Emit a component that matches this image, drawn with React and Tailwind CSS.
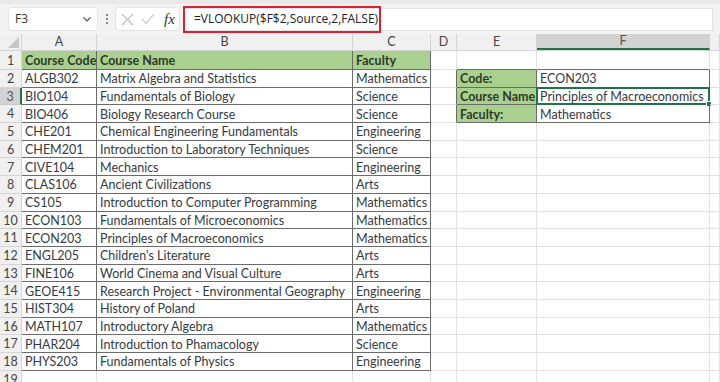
import React from 'react';

const rows = [
    ['Course Code', 'Course Name', 'Faculty'],
    ['ALGB302', 'Matrix Algebra and Statistics', 'Mathematics'],
    ['BIO104', 'Fundamentals of Biology', 'Science'],
    ['BIO406', 'Biology Research Course', 'Science'],
    ['CHE201', 'Chemical Engineering Fundamentals', 'Engineering'],
    ['CHEM201', 'Introduction to Laboratory Techniques', 'Science'],
    ['CIVE104', 'Mechanics', 'Engineering'],
    ['CLAS106', 'Ancient Civilizations', 'Arts'],
    ['CS105', 'Introduction to Computer Programming', 'Mathematics'],
    ['ECON103', 'Fundamentals of Microeconomics', 'Mathematics'],
    ['ECON203', 'Principles of Macroeconomics', 'Mathematics'],
    ['ENGL205', "Children's Literature", 'Arts'],
    ['FINE106', 'World Cinema and Visual Culture', 'Arts'],
    ['GEOE415', 'Research Project - Environmental Geography', 'Engineering'],
    ['HIST304', 'History of Poland', 'Arts'],
    ['MATH107', 'Introductory Algebra', 'Mathematics'],
    ['PHAR204', 'Introduction to Phamacology', 'Science'],
    ['PHYS203', 'Fundamentals of Physics', 'Engineering'],
    ['', '', ''],
];

const lookup = {
    2: ['Code:', 'ECON203'],
    3: ['Course Name', 'Principles of Macroeconomics'],
    4: ['Faculty:', 'Mathematics'],
};

const cols = ['A', 'B', 'C', 'D', 'E', 'F', ''];

const grid = 'grid grid-cols-[22px_75px_256px_78px_26px_80px_173px_1fr]';

const Cell = ({ children, className = '' }) => (
    <div className={`relative flex items-center px-[3px] pt-[2px] leading-[14px] whitespace-nowrap border-r border-b ${className}`}>
        {children}
    </div>
);

export default function App() {
    return (
        <div className="w-[720px] h-[382px] overflow-hidden bg-white text-[#363b42] font-['Lato',sans-serif]">
            {/* Formula bar */}
            <div className="h-[34px] bg-[#f3f3f3] border-t-[4px] border-[#e9e9e9] flex items-center pl-[8px] pr-[7px]">
                <div className="w-[90px] h-[24px] bg-white rounded-[4px] border border-[#e3e3e3] flex items-center justify-between pl-[6px] pr-[5px] text-[12px] text-[#333] font-['Open_Sans',sans-serif]">
                    <span>F3</span>
                    <svg width="10" height="10" viewBox="0 0 10 10" fill="none" stroke="#555" strokeWidth="1.2">
                        <path d="M1.5 3.5 L5 7 L8.5 3.5" />
                    </svg>
                </div>
                <div className="w-[17px] flex flex-col items-center gap-[2px]">
                    <span className="w-[2px] h-[2px] bg-[#888]" />
                    <span className="w-[2px] h-[2px] bg-[#888]" />
                    <span className="w-[2px] h-[2px] bg-[#888]" />
                </div>
                <div className="w-[65px] h-[24px] bg-white rounded-[4px] border border-[#e3e3e3] flex items-center pl-[5px] gap-[7px]">
                    <svg width="13" height="13" viewBox="0 0 13 13" stroke="#bdbdbd" strokeWidth="1.1">
                        <path d="M1 1 L12 12 M12 1 L1 12" />
                    </svg>
                    <svg width="14" height="12" viewBox="0 0 14 12" fill="none" stroke="#bdbdbd" strokeWidth="1.1">
                        <path d="M1 6 L5 10.5 L13 1" />
                    </svg>
                    <span className="ml-[2px] text-[15px] italic text-[#333] font-['Liberation_Serif',serif]">fx</span>
                </div>
                <div className="ml-[3px] flex-1 h-[23px] bg-white border border-[#e3e3e3] flex items-center">
                    <div className="w-[198px] h-[27px] -ml-px border-2 border-[#e01e2d] flex items-center pl-[9px] text-[12px] text-[#222] font-['Open_Sans',sans-serif]">
                        =VLOOKUP($F$2,Source,2,FALSE)
                    </div>
                </div>
            </div>

            {/* Column headers */}
            <div className={`${grid} h-[17px] bg-[#f0f0f0] text-[12.5px] text-[#444] border-b border-[#d4d4d4]`}>
                <div className="relative border-r border-[#d4d4d4]">
                    <svg className="absolute right-[2px] bottom-[2px]" width="11" height="11" viewBox="0 0 11 11">
                        <path d="M11 0 L11 11 L0 11 Z" fill="#c6c6c6" />
                    </svg>
                </div>
                {cols.map((c, i) => (
                    <div
                        key={i}
                        className={`flex items-center justify-center leading-none border-r border-[#d4d4d4] ${c === 'F' ? 'bg-[#d2d2d2] border-b-2 border-b-[#217346] text-[#555]' : ''}`}
                    >
                        {c}
                    </div>
                ))}
            </div>

            {/* Sheet */}
            <div className={`${grid} grid-rows-[19px_repeat(18,17.7px)] text-[12.5px]`}>
                {rows.map((r, idx) => {
                    const n = idx + 1;
                    const inTable = n <= 18;
                    const head = n === 1;
                    const lk = lookup[n];
                    const tbl = inTable ? 'border-[#6b6b6b]' : 'border-[#e1e1e1]';
                    const fill = head ? 'bg-[#a9d08e] font-bold text-[#2f3a2a]' : '';
                    return (
                        <React.Fragment key={n}>
                            <div
                                className={`flex items-center justify-center pt-[2px] leading-none text-[12.5px] border-r border-b ${n === 3 ? 'bg-[#d2d2d2] border-r-2 border-r-[#217346] border-b-[#c8c8c8] text-[#555]' : 'bg-[#f0f0f0] border-[#d4d4d4] text-[#444]'}`}
                            >
                                {n}
                            </div>
                            <Cell className={`${tbl} ${fill}`}>{r[0]}</Cell>
                            <Cell className={`${tbl} ${fill}`}>{r[1]}</Cell>
                            <Cell className={`${tbl} ${fill}`}>{r[2]}</Cell>
                            <Cell className={lk ? 'border-b-[#e1e1e1] border-r-[#6b6b6b]' : 'border-[#e1e1e1]'} />
                            <Cell
                                className={
                                    lk
                                        ? 'border-[#6b6b6b] bg-[#a9d08e] font-bold text-[#2f3a2a]'
                                        : n === 1
                                          ? 'border-r-[#e1e1e1] border-b-[#6b6b6b]'
                                          : 'border-[#e1e1e1]'
                                }
                            >
                                {lk ? lk[0] : ''}
                            </Cell>
                            <Cell className={lk ? 'border-[#6b6b6b]' : n === 1 ? 'border-r-[#e1e1e1] border-b-[#6b6b6b]' : 'border-[#e1e1e1]'}>
                                {lk ? lk[1] : ''}
                                {n === 3 && (
                                    <>
                                        <span className="absolute -left-px -top-px -right-px -bottom-px border-2 border-[#217346]" />
                                        <span className="absolute -right-[3px] -bottom-[3px] w-[6px] h-[6px] bg-[#217346] border border-white" />
                                    </>
                                )}
                            </Cell>
                            <Cell className="border-[#e1e1e1]" />
                        </React.Fragment>
                    );
                })}
            </div>
        </div>
    );
}
